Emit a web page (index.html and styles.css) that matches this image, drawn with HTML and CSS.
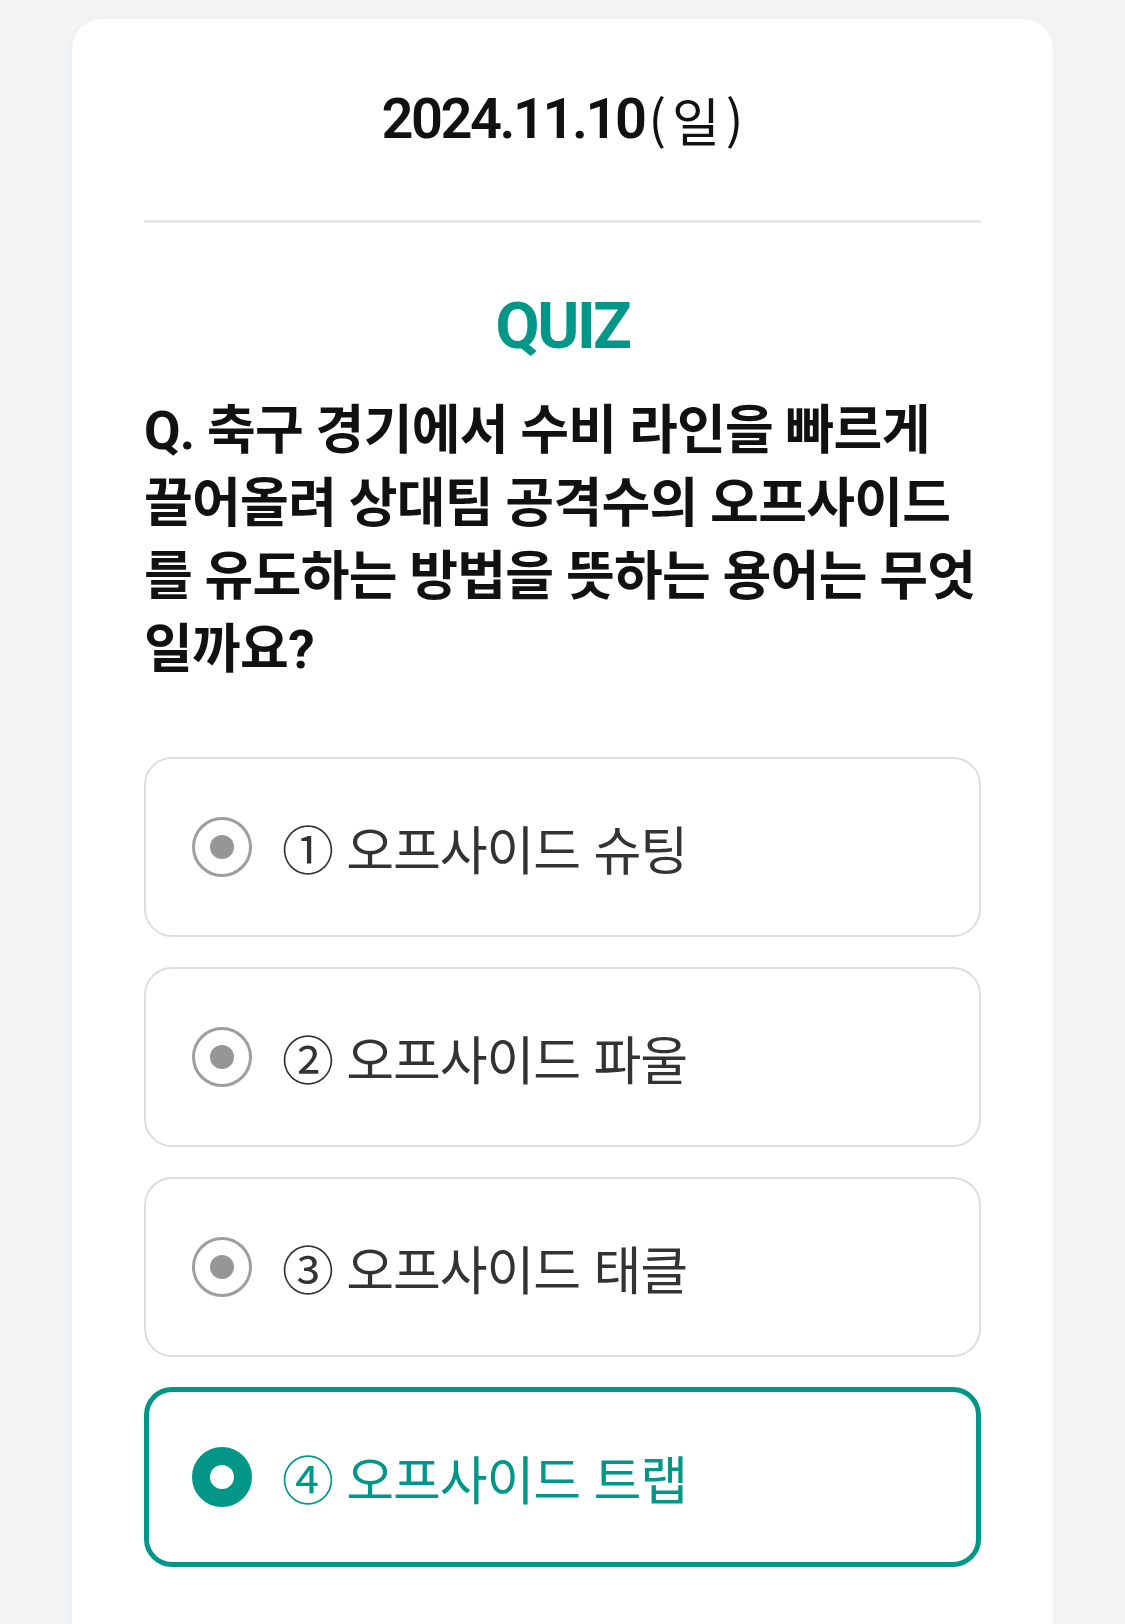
FILE: index.html
```html
<!DOCTYPE html>
<html lang="ko">
<head>
<meta charset="utf-8">
<title>Quiz</title>
<link rel="stylesheet" href="styles.css">
</head>
<body>
<main class="card">
  <header class="date-block">
    <span class="date">2024.11.10</span><span class="weekday">(<span class="wd">일</span>)</span>
  </header>
  <hr class="divider">
  <h2 class="quiz-title">QUIZ</h2>
  <p class="question">Q. 축구 경기에서 수비 라인을 빠르게<br>끌어올려 상대팀 공격수의 오프사이드<br>를 유도하는 방법을 뜻하는 용어는 무엇<br>일까요?</p>
  <ul class="options">
    <li class="option"><span class="radio"><span class="dot"></span></span><span class="label">① 오프사이드 슈팅</span></li>
    <li class="option"><span class="radio"><span class="dot"></span></span><span class="label">② 오프사이드 파울</span></li>
    <li class="option"><span class="radio"><span class="dot"></span></span><span class="label">③ 오프사이드 태클</span></li>
    <li class="option selected"><span class="radio"><span class="dot"></span></span><span class="label">④ 오프사이드 트랩</span></li>
  </ul>
</main>
</body>
</html>
```

FILE: styles.css
```css
* { box-sizing: border-box; }
html, body { margin: 0; padding: 0; }
body {
  background: #f3f4f6;
  font-family: Roboto, "Noto Sans CJK KR", sans-serif;
  color: #111;
}
.card {
  margin: 19px 72px 0;
  background: #fff;
  border-radius: 30px;
  padding: 60px 72px 120px;
  box-shadow: 0 0 12px rgba(0,0,0,0.03);
}
.date-block {
  height: 80px;
  display: flex;
  justify-content: center;
  align-items: center;
}
.date {
  font-size: 56px;
  font-weight: 600;
  letter-spacing: -2.5px;
  color: #111;
}
.weekday {
  font-family: "Noto Sans CJK KR", sans-serif;
  font-size: 52px;
  font-weight: 400;
  color: #111;
  margin-left: 4px;
}
.wd {
  margin: 0 6px;
}
.divider {
  margin: 61px 0 0;
  border: 0;
  height: 3px;
  background: #e6e6e6;
}
.quiz-title {
  margin: 64px 0 0;
  height: 80px;
  line-height: 80px;
  text-align: center;
  font-size: 64px;
  font-weight: 700;
  letter-spacing: -2.5px;
  color: #009688;
}
.question {
  margin: 28px 0 0;
  font-size: 53px;
  line-height: 73px;
  font-weight: 700;
  letter-spacing: -0.7px;
  white-space: nowrap;
  color: #111;
}
.options {
  list-style: none;
  margin: 70px 0 0;
  padding: 0;
  display: flex;
  flex-direction: column;
  gap: 30px;
}
.option {
  height: 180px;
  border: 2px solid #dddddd;
  border-radius: 28px;
  display: flex;
  align-items: center;
  padding-left: 46px;
}
.radio {
  width: 60px;
  height: 60px;
  flex: none;
  border-radius: 50%;
  border: 3px solid #9e9e9e;
  display: flex;
  align-items: center;
  justify-content: center;
}
.dot {
  width: 24px;
  height: 24px;
  border-radius: 50%;
  background: #969696;
}
.label {
  margin-left: 30px;
  font-family: "Noto Sans CJK KR", sans-serif;
  font-size: 52px;
  font-weight: 400;
  letter-spacing: -1.1px;
  color: #333;
}
.option.selected {
  border: 5px solid #009688;
  padding-left: 43px;
}
.option.selected .radio {
  border: 18px solid #009688;
  background: #fff;
}
.option.selected .dot { display: none; }
.option.selected .label { color: #009688; }
```
